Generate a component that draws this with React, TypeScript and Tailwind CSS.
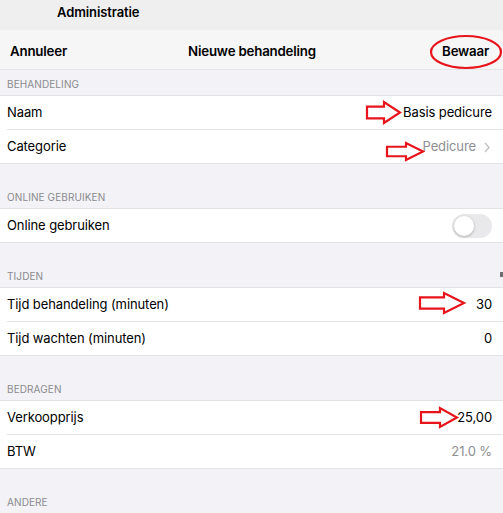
import React from "react";

type Row = {
  label: string;
  value?: string;
  muted?: boolean;
  chevron?: boolean;
  toggle?: boolean;
};

type Group = { title: string; rows: Row[] };

const groups: Group[] = [
  {
    title: "BEHANDELING",
    rows: [
      { label: "Naam", value: "Basis pedicure" },
      { label: "Categorie", value: "Pedicure", muted: true, chevron: true },
    ],
  },
  { title: "ONLINE GEBRUIKEN", rows: [{ label: "Online gebruiken", toggle: true }] },
  {
    title: "TIJDEN",
    rows: [
      { label: "Tijd behandeling (minuten)", value: "30" },
      { label: "Tijd wachten (minuten)", value: "0" },
    ],
  },
  {
    title: "BEDRAGEN",
    rows: [
      { label: "Verkoopprijs", value: "25,00" },
      { label: "BTW", value: "21.0 %", muted: true },
    ],
  },
  { title: "ANDERE", rows: [{ label: "" }] },
];

// red outline arrow, drawn by hand in the screenshot
const Arrow: React.FC<{ x: number; y: number; w: number; h: number; head: number }> = ({
  x,
  y,
  w,
  h,
  head,
}) => {
  const mid = h / 2;
  const s = h * 0.28;
  const pts = [
    [0, mid - s],
    [w - head, mid - s],
    [w - head, 0],
    [w, mid],
    [w - head, h],
    [w - head, mid + s],
    [0, mid + s],
  ]
    .map((p) => p.join(","))
    .join(" ");
  return (
    <polygon
      points={pts}
      transform={`translate(${x} ${y})`}
      fill="none"
      stroke="#e8141c"
      strokeWidth={2.2}
      strokeLinejoin="miter"
    />
  );
};

const Toggle: React.FC = () => (
  <div className="h-6 w-10 rounded-full bg-[#e9e9eb] p-[2px]">
    <div className="h-5 w-5 rounded-full bg-white shadow-[0_1px_3px_rgba(0,0,0,0.25)]" />
  </div>
);

export default function App() {
  return (
    <div
      className="relative h-[513px] w-[503px] overflow-hidden bg-[#f2f2f7] text-black"
      style={{ fontFamily: "Inter, 'Liberation Sans', sans-serif" }}
    >
      {/* status / back area */}
      <div className="flex h-[30px] items-center bg-[#efeff0] pb-[4px] pl-[57px] text-[13px] font-semibold tracking-[-0.1px]">
        Administratie
      </div>

      {/* nav bar */}
      <div className="relative flex h-10 items-center justify-between border-b border-[#e6e6e8] bg-[#f6f6f6] px-[10px] pt-[4px] text-[13.3px] font-semibold tracking-[-0.2px]">
        <span>Annuleer</span>
        <span className="absolute left-1/2 -translate-x-1/2 pl-[1px]">Nieuwe behandeling</span>
        <span className="pr-[4px]">Bewaar</span>
      </div>

      {groups.map((g, gi) => (
        <div key={g.title}>
          <div
            className={`flex items-end px-[7px] pb-[3px] text-[10px] tracking-[0.1px] text-[#8a8a8e] ${
              gi === 0 ? "h-[25px]" : "h-[44px]"
            }`}
          >
            {g.title}
          </div>
          <div className="border-y border-[#e3e3e6] bg-white">
            {g.rows.map((r, ri) => (
              <div key={ri} className="pl-[7px]">
                <div
                  className={`flex h-[33px] items-center justify-between pr-[11px] pt-[1px] text-[13px] tracking-[-0.1px] ${
                    ri < g.rows.length - 1 ? "h-[34px] border-b border-[#e3e3e6]" : ""
                  }`}
                >
                  <span>{r.label}</span>
                  {r.toggle ? (
                    <Toggle />
                  ) : (
                    <span className={`flex items-center gap-[8px] ${r.muted ? "text-[#8e8e93]" : ""}`}>
                      {r.value}
                      {r.chevron && (
                        <svg width="6" height="11" viewBox="0 0 6 11" className="mr-[2px]">
                          <path d="M1 1l4 4.5L1 10" fill="none" stroke="#c4c4c7" strokeWidth="1.5" />
                        </svg>
                      )}
                    </span>
                  )}
                </div>
              </div>
            ))}
          </div>
        </div>
      ))}

      {/* scroll indicator tick */}
      <div className="absolute left-[500px] top-[272px] h-[5px] w-[3px] bg-[#6e6e73]" />

      {/* red annotations */}
      <svg className="pointer-events-none absolute inset-0" width="503" height="513">
        <ellipse cx="466" cy="52" rx="35" ry="16" fill="none" stroke="#e8141c" strokeWidth="2.2" />
        <Arrow x={367} y={102} w={33} h={21} head={16} />
        <Arrow x={387} y={143} w={36} h={17} head={17} />
        <Arrow x={420} y={293} w={44} h={20} head={20} />
        <Arrow x={421} y={408} w={36} h={19} head={17} />
      </svg>
    </div>
  );
}
